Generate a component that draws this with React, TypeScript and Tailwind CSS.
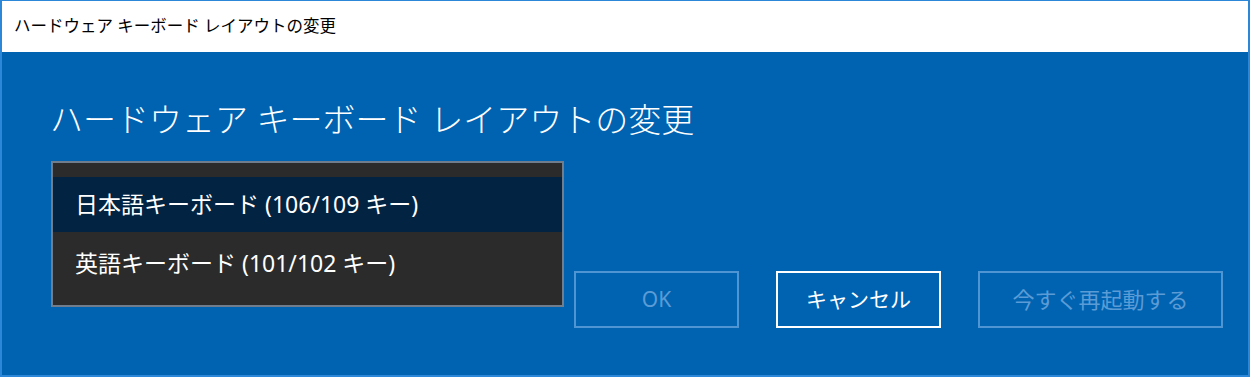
const jp = { fontFamily: '"Noto Sans", "Noto Sans CJK JP", sans-serif' }

const layouts = [
    { label: '日本語キーボード (106/109 キー)', selected: true },
    { label: '英語キーボード (101/102 キー)', selected: false },
]

const App = () => {
    return (
        <div className="flex h-[377px] w-[1250px] flex-col bg-[#2d87d9] px-[2px] pb-[2px] pt-[1px]" style={jp}>
            <div className="flex h-[51px] shrink-0 items-center bg-white pl-[12px] text-[16.5px] text-black">
                ハードウェア キーボード レイアウトの変更
            </div>

            <div className="relative flex flex-1 flex-col bg-[#0063b1] pl-[48px] pt-[44px]">
                <h1 className="text-[33px] leading-[48px] font-light text-white">
                    ハードウェア キーボード レイアウトの変更
                </h1>

                <div className="mt-[127px] flex justify-end gap-[37px] pr-[25px]">
                    <button className="h-[57px] w-[165px] border-2 border-[#4f95d3] text-[21px] text-[#5b9bd6]">
                        OK
                    </button>
                    <button className="h-[57px] w-[165px] border-2 border-white text-[21px] text-white">
                        キャンセル
                    </button>
                    <button className="h-[57px] w-[245px] border-2 border-[#4f95d3] text-[22px] text-[#5b9bd6]">
                        今すぐ再起動する
                    </button>
                </div>

                {/* opened dropdown lies over the combobox */}
                <div className="absolute left-[49px] top-[109px] flex h-[146px] w-[513px] flex-col border-2 border-[#6f7d8c] bg-[#2b2b2b] pb-[11px] pt-[14px]">
                    {layouts.map((item) => (
                        <div
                            key={item.label}
                            className={`flex items-center pl-[22px] text-[23px] text-white ${item.selected ? 'h-[55px] bg-[#022342]' : 'h-[62px]'}`}
                        >
                            {item.label}
                        </div>
                    ))}
                </div>
            </div>
        </div>
    )
}

export default App
